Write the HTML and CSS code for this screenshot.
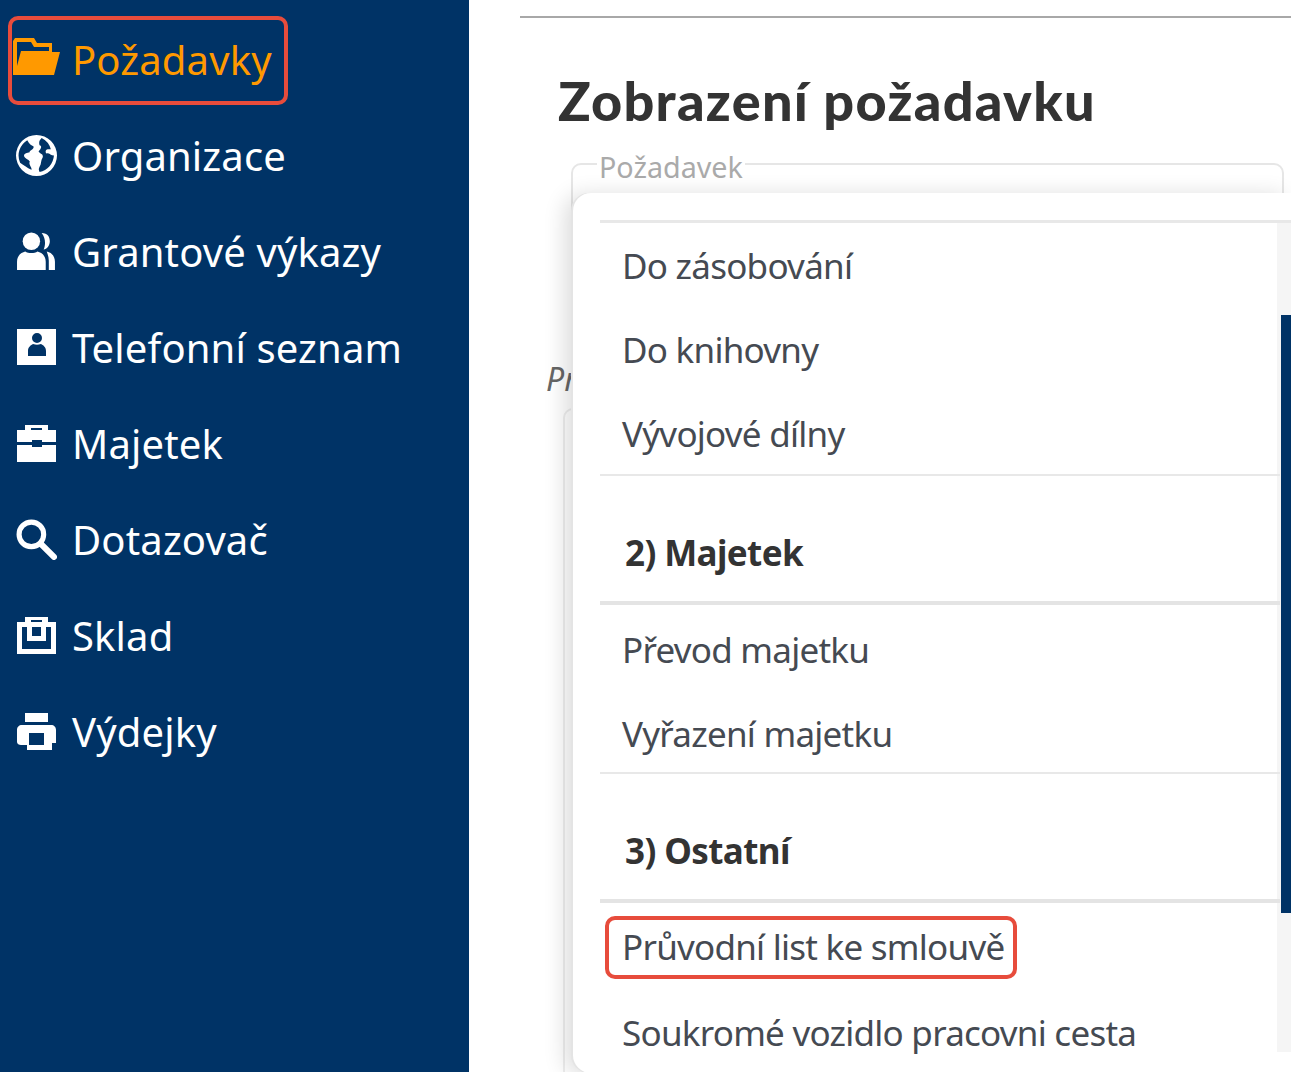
FILE: index.html
```html
<!DOCTYPE html>
<html lang="cs">

<head>
    <meta charset="UTF-8" />
    <meta name="viewport" content="width=device-width, initial-scale=1.0" />
    <title>Zobrazení požadavku</title>
    <link rel="stylesheet" href="styles.css">
</head>

<body>
    <nav class="sidebar">
        <a class="nav-item active">
            <svg class="nav-icon folder" viewBox="0 0 47 37"><path fill-rule="evenodd" d="M0 37V3L2 0H21L24 5H39V14H47L41 37zM4 28L8 13H36V9H21L18 4H4z" fill="currentColor"/></svg>
            <span>Požadavky</span>
        </a>
        <a class="nav-item">
            <svg class="nav-icon" viewBox="0 0 40 40"><path fill-rule="evenodd" d="M20 0a20 20 0 1 1 0 40 20 20 0 0 1 0-40zM11 5A17.500 17.500 0 0 0 4 27c3 2 7 5 11 7 1-2-2-4-2-7 2-2-3-3-5-6-1-3 3-4 5-4 1-3 5-3 4-6-2-1-4-2-6-6zM25 3c-2 2-3 4-2 7 3 1 1 4-1 6 2 3 5 2 4 6-2 3-1 6-3 9-1 2-1 3 0 5a17.500 17.500 0 0 0 14-16c-3 0-5-3-7-2-2-1-1-4 1-4h3A17.500 17.500 0 0 0 25 3z" fill="currentColor"/></svg>
            <span>Organizace</span>
        </a>
        <a class="nav-item">
            <svg class="nav-icon" viewBox="0 0 40 40"><circle cx="15" cy="10" r="8.500" fill="currentColor"/><path d="M1 38v-8c0-6 4-9 8-10 3 2 9 2 12 0 4 1 8 4 8 10v8z" fill="currentColor"/><path d="M25 2c6 0 8 4 8 8s-3 8-6 8c2-5 2-11-2-16zM30 20c5 1 8 5 8 10v8h-6v-9c0-3-1-6-2-9z" fill="currentColor"/></svg>
            <span>Grantové výkazy</span>
        </a>
        <a class="nav-item">
            <svg class="nav-icon" viewBox="0 0 41 41"><path fill-rule="evenodd" d="M1 2H40V38H1zM21 6a5 5 0 1 0 0 10 5 5 0 0 0 0-10zM12 29H30V24C30 20 27 18 25 17 22 18 20 18 17 17 15 18 12 20 12 24z" fill="currentColor"/></svg>
            <span>Telefonní seznam</span>
        </a>
        <a class="nav-item">
            <svg class="nav-icon" viewBox="0 0 41 41"><path fill-rule="evenodd" d="M9 7V2H32V7H40V19H26V17H16V19H1V7zM15 5H26V7H15zM1 22H16V24H26V22H40V39H1z" fill="currentColor"/></svg>
            <span>Majetek</span>
        </a>
        <a class="nav-item">
            <svg class="nav-icon" viewBox="0 0 40 40"><circle cx="15" cy="15" r="12" fill="none" stroke="currentColor" stroke-width="5"/><path d="M24 24l13 13" stroke="currentColor" stroke-width="6" stroke-linecap="round"/></svg>
            <span>Dotazovač</span>
        </a>
        <a class="nav-item">
            <svg class="nav-icon" viewBox="0 0 41 41"><path fill-rule="evenodd" d="M9 7V2H32V7H40V39H1V7zM15 5H26V7H15zM6 12V34H35V12H30V26H11V12zM16 12V21H25V12z" fill="currentColor"/></svg>
            <span>Sklad</span>
        </a>
        <a class="nav-item">
            <svg class="nav-icon" viewBox="0 0 41 41"><path fill-rule="evenodd" d="M9 2H32V11H9zM6 14H35C38 14 40 16 40 19V32H36V39H11V34H5C3 34 1 33 1 31V19C1 16 3 14 6 14zM13 22V34H28V22z" fill="currentColor"/></svg>
            <span>Výdejky</span>
        </a>
    </nav>

    <main class="content">
        <hr class="top-line">
        <h1>Zobrazení požadavku</h1>
        <fieldset class="request-box">
            <legend>Požadavek</legend>
        </fieldset>
        <p class="hidden-label">Pr</p>
        <div class="back-card"></div>

        <div class="menu">
            <div class="menu-list">
                <div class="menu-group first">
                    <div class="menu-item">Do zásobování</div>
                    <div class="menu-item">Do knihovny</div>
                    <div class="menu-item">Vývojové dílny</div>
                </div>
                <div class="menu-head">2) Majetek</div>
                <div class="menu-group">
                    <div class="menu-item">Převod majetku</div>
                    <div class="menu-item">Vyřazení majetku</div>
                </div>
                <div class="menu-head">3) Ostatní</div>
                <div class="menu-group last">
                    <div class="menu-item marked"><span>Průvodní list ke smlouvě</span></div>
                    <div class="menu-item">Soukromé vozidlo pracovni cesta</div>
                </div>
            </div>
            <div class="scroll-track"><div class="scroll-thumb"></div></div>
        </div>
    </main>
</body>

</html>
```

FILE: styles.css
```css
* {
    box-sizing: border-box;
}

html, body {
    height: 100%;
}

body {
    margin: 0;
    display: flex;
    overflow: hidden;
    background: #fff;
    font-family: "Noto Sans", sans-serif;
    color: #444;
}

.sidebar {
    width: 469px;
    flex: none;
    padding-top: 11px;
    background: #003366;
    color: #fff;
}

.nav-item {
    display: flex;
    align-items: center;
    height: 96px;
    padding-left: 16px;
    gap: 15px;
    font-size: 40px;
    letter-spacing: 0.15px;
}

.nav-item.active {
    position: relative;
    color: #ff9900;
}

.nav-item.active::after {
    content: "";
    position: absolute;
    left: 8px;
    top: 5px;
    width: 272px;
    height: 81px;
    border: 4px solid #e74c3c;
    border-radius: 10px;
}

.nav-icon {
    width: 41px;
    height: 41px;
    flex: none;
}

.nav-icon.folder {
    width: 47px;
    height: 37px;
    margin: 0 -3px 6px -3px;
}

.content {
    position: relative;
    flex: 1;
    padding: 16px 0 0 51px;
    min-width: 0;
}

.top-line {
    margin: 0;
    border: 0;
    border-top: 2px solid #a8a8a8;
}

h1 {
    margin: 52px 0 0 38px;
    font-family: Lato, sans-serif;
    font-size: 54px;
    line-height: 62px;
    font-weight: 900;
    letter-spacing: 1.3px;
    color: #333;
}

.request-box {
    height: 213px;
    margin: 12px 7px 0 51px;
    padding: 0 24px;
    border: 2px solid #e6e6e6;
    border-radius: 10px;
}

legend {
    padding: 6px 2px 0;
    font-size: 28.7px;
    line-height: 34px;
    color: #aaa;
}

.hidden-label {
    margin: 0 0 0 26px;
    font-size: 32px;
    font-style: italic;
    color: #666;
}

.back-card {
    height: 700px;
    margin: 8px 0 0 43px;
    border: 2px solid #eee;
    border-radius: 10px;
}

.menu {
    position: absolute;
    left: 104px;
    top: 193px;
    right: 0;
    height: 880px;
    padding: 27px 0 21px 27px;
    display: flex;
    background: #fff;
    border-radius: 18px 0 0 18px;
    box-shadow: -2px 0 0 #e4e4e4, -8px 2px 22px rgba(0, 0, 0, 0.14);
}

.menu-list {
    position: relative;
    z-index: 1;
    flex: 1;
    min-width: 0;
    margin-right: -3px;
    border-top: 3px solid #e8e8e8;
}

.menu-group {
    display: flex;
    flex-direction: column;
    gap: 8px;
    padding: 6px 0 1px;
    border-bottom: 2px solid #e8e8e8;
}

.menu-group.first {
    padding: 4px 0 3px;
}

.menu-group.last {
    padding: 5px 0 0;
    gap: 10px;
    border-bottom: 0;
}

.menu-item {
    display: flex;
    align-items: center;
    height: 76px;
    padding-left: 22px;
    font-size: 35px;
    letter-spacing: -0.75px;
    color: #454a52;
}

.menu-item.marked {
    position: relative;
}

.menu-item.marked::after {
    content: "";
    position: absolute;
    left: 5px;
    top: 8px;
    width: 404px;
    height: 55px;
    border: 4px solid #e74c3c;
    border-radius: 10px;
}

.menu-head {
    display: flex;
    align-items: flex-end;
    height: 129px;
    padding: 0 0 25px 25px;
    border-bottom: 4px solid #e4e4e4;
    font-size: 35px;
    font-weight: 700;
    letter-spacing: -0.6px;
    color: #333;
}

.scroll-track {
    width: 14px;
    flex: none;
    padding: 92px 0 139px 4px;
    border-top: 3px solid #e8e8e8;
    background: #f5f5f5;
}

.scroll-thumb {
    height: 100%;
    background: #003366;
}
```
